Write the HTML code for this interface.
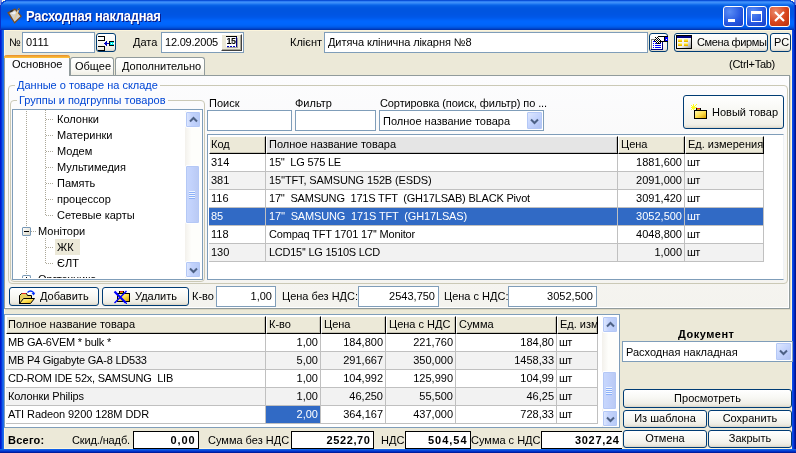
<!DOCTYPE html>
<html lang="ru"><head><meta charset="utf-8"><title>Расходная накладная</title>
<style>
html,body{margin:0;padding:0}
body{will-change:transform;width:796px;height:453px;overflow:hidden;position:relative;background:#ece9d8;font-family:"Liberation Sans",sans-serif;font-size:11px;color:#000;line-height:13px}
.a{position:absolute;white-space:pre}
.t{position:absolute;white-space:pre;height:13px;line-height:13px}
.inp{position:absolute;box-sizing:border-box;border:1px solid #7f9db9;background:#fff}
.btn{position:absolute;box-sizing:border-box;border:1px solid #003c74;border-radius:3px;background:linear-gradient(to top,#d6d0c5 0,#e3e0d4 1px,#ebe9df 2px,#f1f0e9 4px,#f8f8f4 55%,#fff 100%);text-align:center}
.blue{color:#0046d5}
.b{font-weight:bold}
.r{text-align:right}
.gb{position:absolute;box-sizing:border-box;border:1px solid #cbc9b6;border-radius:4px}
.hd{position:absolute;box-sizing:border-box;height:18px;background:#ece9d8;border-right:1px solid #000;border-bottom:1px solid #000;border-top:1px solid #fff;border-left:1px solid #fff;box-shadow:inset -1px -1px 0 rgba(0,0,0,.16)}
.hd.g{background:#e5e5e5}
.cell{position:absolute;box-sizing:border-box;height:18px;border-right:1px solid #c0c0c0;border-bottom:1px solid #c0c0c0;line-height:17px;white-space:pre;overflow:hidden}
.sb{position:absolute;background:linear-gradient(90deg,#f3f1ec,#fefefb 40%,#fefefb)}
.sbb{position:absolute;box-sizing:border-box;border:1px solid #fff;border-radius:2px;background:linear-gradient(90deg,#e1eafe,#c3d3fd 40%,#b7caf5);box-shadow:inset 0 0 0 1px #b4c8f6}
.sbt{position:absolute;box-sizing:border-box;border:1px solid #fff;border-radius:2px;background:linear-gradient(90deg,#c9d8fc,#c2d2fc 40%,#b9c9f3);box-shadow:inset 0 0 0 1px #b4c8f6}
.vb{position:absolute;box-sizing:border-box;border:1px solid #000;background:#fff;height:17px}
.dd{position:absolute;box-sizing:border-box;border:1px solid #fff;border-radius:2px;background:linear-gradient(135deg,#e1eafe,#c3d3fd 50%,#aebff0);box-shadow:inset 0 0 0 1px #b4c8f6}
</style></head><body>
<div class="a" style="left:0;top:0;width:796px;height:30px;background:linear-gradient(#0a50d8 0px,#0a50d8 1px,#2f7ff5 1px,#2f7ff5 2px,#3d8ff8 2px,#3d8ff8 3px,#2c82f5 3px,#2c82f5 4px,#1570ee 4px,#1570ee 5px,#0862e6 5px,#0862e6 6px,#035ce3 6px,#035ce3 7px,#0158e1 7px,#0158e1 8px,#0056e0 8px,#0056e0 9px,#0055e0 9px,#0055e0 10px,#0055e0 10px,#0055e0 11px,#0055e0 11px,#0055e0 12px,#0055e1 12px,#0055e1 13px,#0055e2 13px,#0055e2 14px,#0055e3 14px,#0055e3 15px,#0056e5 15px,#0056e5 16px,#0057e7 16px,#0057e7 17px,#0059ea 17px,#0059ea 18px,#005cef 18px,#005cef 19px,#0060f5 19px,#0060f5 20px,#0064fb 20px,#0064fb 21px,#0066fe 21px,#0066fe 22px,#0066fe 22px,#0066fe 23px,#0066fd 23px,#0066fd 24px,#0065fb 24px,#0065fb 25px,#0062f6 25px,#0062f6 26px,#005ded 26px,#005ded 27px,#0054e0 27px,#0054e0 28px,#0047cc 28px,#0047cc 29px,#0036b4 29px,#0036b4 30px)"></div>
<div class="a" style="left:0;top:30px;width:4px;height:423px;background:linear-gradient(90deg,#0019cf 0 1px,#0831d9 1px 2px,#0f5ce6 2px 3px,#1e6cec 3px 4px)"></div>
<div class="a" style="left:792px;top:30px;width:4px;height:423px;background:linear-gradient(90deg,#0a4ce6 0 1px,#0838d8 1px 2px,#0024b4 2px 3px,#001590 3px 4px)"></div>
<div class="a" style="left:0;top:449px;width:796px;height:4px;background:linear-gradient(#1060e8 0 1px,#0848d8 1px 2px,#0030c8 2px 3px,#001c9c 3px 4px)"></div>
<div class="a b" style="left:26px;top:9px;font-size:13px;line-height:16px;color:#fff;text-shadow:1px 1px 0 #0a1883;letter-spacing:-0.3px;transform:scaleY(1.07);transform-origin:0 13px">Расходная накладная</div>
<div class="a" style="left:723px;top:6px;width:21px;height:21px;box-sizing:border-box;border:1px solid #fff;border-radius:3px;background:radial-gradient(circle at 30% 25%,#5a8df5,#2456e0 60%,#1a3fc4)"><div class="a" style="left:4px;top:12px;width:7px;height:3px;background:#fff"></div></div>
<div class="a" style="left:746px;top:6px;width:21px;height:21px;box-sizing:border-box;border:1px solid #fff;border-radius:3px;background:radial-gradient(circle at 30% 25%,#5a8df5,#2456e0 60%,#1a3fc4)"><div class="a" style="left:4px;top:4px;width:11px;height:11px;box-sizing:border-box;border:1px solid #fff;border-top-width:3px"></div></div>
<div class="a" style="left:769px;top:6px;width:21px;height:21px;box-sizing:border-box;border:1px solid #fff;border-radius:3px;background:radial-gradient(circle at 30% 25%,#ea8a6c,#d8441c 55%,#b8300c)"><svg class="a" style="left:0;top:0" width="19" height="19"><path d="M5 5l9 9M14 5l-9 9" stroke="#fff" stroke-width="2.2"/></svg></div>
<svg class="a" style="left:6px;top:7px" width="18" height="18" viewBox="6 7 18 18"><polygon points="7.2,12.6 15,8.2 22,16.2 14.6,23.8" fill="#7a4e22" shape-rendering="auto"/><polygon points="9.4,13 15,10 20.4,16.2 14.6,21.8" fill="#d0d0d0" shape-rendering="auto"/><polygon points="11,13.6 14.6,11.6 16,13 14,14.4" fill="#f2f2f2" shape-rendering="auto"/><path d="M10.2 11.8l2.6-1.4" stroke="#303030" stroke-width="1.6" shape-rendering="auto"/><path d="M19 8.6l-4.6 11" stroke="#e8c890" stroke-width="1.5" shape-rendering="auto"/><path d="M19.3 8.2l-.8 2" stroke="#6a4a20" stroke-width="1.4" shape-rendering="auto"/></svg>
<svg class="a" style="left:0;top:0" width="796" height="30" shape-rendering="crispEdges"><rect x="0" y="0" width="2" height="2" fill="#7b8ce3"/><rect x="0" y="2" width="1" height="3" fill="#7b8ce3"/><rect x="2" y="0" width="3" height="1" fill="#fffbe6"/><rect x="2" y="1" width="1" height="1" fill="#fffbe6"/><rect x="1" y="2" width="1" height="1" fill="#3a55d8"/><rect x="794" y="0" width="2" height="2" fill="#7b8ce3"/><rect x="795" y="2" width="1" height="3" fill="#7b8ce3"/><rect x="791" y="0" width="3" height="1" fill="#fffbe6"/><rect x="793" y="1" width="1" height="1" fill="#fffbe6"/><rect x="794" y="2" width="1" height="1" fill="#3a55d8"/><rect x="3" y="1" width="3" height="1" fill="#0b4bd6"/><rect x="2" y="2" width="2" height="1" fill="#0b4bd6"/><rect x="1" y="3" width="2" height="1" fill="#0b4bd6"/><rect x="1" y="4" width="1" height="1" fill="#0b4bd6"/><rect x="790" y="1" width="3" height="1" fill="#0b4bd6"/><rect x="792" y="2" width="2" height="1" fill="#0b4bd6"/><rect x="793" y="3" width="2" height="1" fill="#0b4bd6"/><rect x="794" y="4" width="1" height="1" fill="#0b4bd6"/><rect x="0" y="5" width="1" height="25" fill="#0a2fc6"/><rect x="795" y="5" width="1" height="25" fill="#001c9c"/><rect x="794" y="5" width="1" height="25" fill="#0838d0"/></svg>
<div class="a" style="left:4px;top:30px;width:788px;height:419px;box-sizing:border-box;border:1px solid #fcf5dc"></div>
<div class="t " style="left:9px;top:36px;">№</div>
<div class="inp" style="left:22px;top:32px;width:73px;height:21px"></div>
<div class="t " style="left:26px;top:36px;">0111</div>
<div class="btn" style="left:96px;top:33px;width:20px;height:19px"></div>
<svg class="a" style="left:96px;top:33px" width="20" height="19" viewBox="96 33 20 19" shape-rendering="crispEdges"><rect x="98" y="36" width="7" height="1" fill="#000"/><rect x="104" y="36" width="1" height="5" fill="#000"/><rect x="98" y="40" width="7" height="1" fill="#000"/><rect x="98" y="46" width="7" height="1" fill="#000"/><rect x="104" y="46" width="1" height="5" fill="#000"/><rect x="98" y="50" width="7" height="1" fill="#000"/><rect x="105" y="43" width="5" height="1" fill="#0000c0"/><rect x="105" y="42" width="2" height="3" fill="#0000c0"/><rect x="106" y="41" width="1" height="5" fill="#0000c0"/><rect x="104" y="43" width="1" height="1" fill="#0000c0"/><rect x="109" y="41" width="5" height="5" fill="#000"/><rect x="110" y="42" width="4" height="3" fill="#00e8e8"/><rect x="111" y="43" width="1" height="1" fill="#fff"/><rect x="113" y="43" width="1" height="1" fill="#fff"/></svg>
<div class="t " style="left:133px;top:36px;">Дата</div>
<div class="inp" style="left:161px;top:32px;width:83px;height:21px"></div>
<div class="t " style="left:165px;top:36px;letter-spacing:-0.206px;">12.09.2005</div>
<div class="a" style="left:221px;top:34px;width:21px;height:17px;box-sizing:border-box;background:#ece9d8;border-top:1px solid #fff;border-left:1px solid #fff;border-right:1px solid #404040;border-bottom:1px solid #404040;box-shadow:inset -1px -1px 0 #aca899"></div>
<svg class="a" style="left:224px;top:35px" width="15" height="13" viewBox="224 35 15 13" shape-rendering="crispEdges"><rect x="226" y="36" width="11" height="1" fill="#000"/><rect x="227" y="38" width="11" height="10" fill="#a0a0a0"/><rect x="226" y="37" width="10" height="10" fill="#fff"/><rect x="236" y="37" width="1" height="10" fill="#000080"/><rect x="227" y="46" width="2" height="1" fill="#0000c0"/><rect x="230" y="46" width="2" height="1" fill="#0000c0"/><rect x="233" y="46" width="2" height="1" fill="#0000c0"/></svg>
<div class="a b" style="left:226px;top:36px;width:10px;height:10px;font-size:9px;line-height:10px;text-align:center;letter-spacing:-0.5px">15</div>
<div class="t " style="left:290px;top:36px;">Клієнт</div>
<div class="inp" style="left:324px;top:32px;width:324px;height:21px"></div>
<div class="t " style="left:328px;top:36px;letter-spacing:-0.083px;">Дитяча клінична лікарня №8</div>
<div class="btn" style="left:649px;top:33px;width:19px;height:19px"></div>
<svg class="a" style="left:650px;top:34px" width="18" height="17" viewBox="650 34 18 17" shape-rendering="crispEdges"><rect x="651" y="39" width="11" height="1" fill="#808080"/><rect x="651" y="39" width="1" height="11" fill="#808080"/><rect x="652" y="40" width="10" height="9" fill="#fff"/><rect x="651" y="49" width="12" height="1" fill="#000080"/><rect x="662" y="41" width="1" height="9" fill="#000080"/><rect x="653" y="41" width="2" height="1" fill="#0000ff"/><rect x="653" y="43" width="1" height="1" fill="#0000ff"/><rect x="655" y="43" width="6" height="1" fill="#0000ff"/><rect x="653" y="45" width="1" height="1" fill="#0000ff"/><rect x="655" y="45" width="6" height="1" fill="#0000ff"/><rect x="653" y="47" width="1" height="1" fill="#0000ff"/><rect x="655" y="47" width="6" height="1" fill="#0000ff"/><polygon points="654.5,40.5 658.5,36.5 664.5,36.5 664.5,41.5 661.5,41.5 659.5,43.5" fill="#fff" stroke="none"/><rect x="658" y="36" width="7" height="1" fill="#000"/><rect x="660" y="41" width="5" height="1" fill="#000"/><rect x="654" y="40" width="1" height="1" fill="#000"/><rect x="655" y="39" width="1" height="1" fill="#000"/><rect x="656" y="38" width="1" height="1" fill="#000"/><rect x="657" y="37" width="1" height="1" fill="#000"/><rect x="658" y="36" width="1" height="1" fill="#000"/><rect x="655" y="41" width="1" height="1" fill="#000"/><rect x="656" y="42" width="1" height="1" fill="#000"/><rect x="657" y="43" width="1" height="1" fill="#000"/><rect x="658" y="43" width="1" height="1" fill="#000"/><rect x="659" y="43" width="1" height="1" fill="#000"/><rect x="655" y="37" width="1" height="1" fill="#000"/><rect x="657" y="37" width="1" height="1" fill="#000"/><rect x="656" y="38" width="1" height="1" fill="#000"/><rect x="658" y="38" width="1" height="1" fill="#000"/><rect x="655" y="39" width="1" height="1" fill="#000"/><rect x="657" y="39" width="1" height="1" fill="#000"/><rect x="659" y="39" width="1" height="1" fill="#000"/><rect x="656" y="40" width="1" height="1" fill="#000"/><rect x="658" y="40" width="1" height="1" fill="#000"/><rect x="660" y="40" width="1" height="1" fill="#000"/><rect x="655" y="41" width="1" height="1" fill="#000"/><rect x="657" y="41" width="1" height="1" fill="#000"/><rect x="659" y="41" width="1" height="1" fill="#000"/><rect x="661" y="41" width="1" height="1" fill="#000"/><rect x="656" y="42" width="1" height="1" fill="#000"/><rect x="658" y="42" width="1" height="1" fill="#000"/><rect x="660" y="42" width="1" height="1" fill="#000"/><rect x="664" y="36" width="4" height="6" fill="#000"/><rect x="665" y="37" width="3" height="4" fill="#0000ff"/><rect x="666" y="39" width="1" height="1" fill="#fff"/></svg>
<div class="btn" style="left:674px;top:33px;width:94px;height:19px"></div>
<div class="t " style="left:697px;top:36px;letter-spacing:-0.378px;">Смена фирмы</div>
<svg class="a" style="left:676px;top:35px" width="16" height="14" viewBox="676 35 16 14" shape-rendering="crispEdges"><rect x="676" y="35" width="16" height="14" fill="#000"/><defs><linearGradient id="wg" x1="0" y1="0" x2="1" y2="1"><stop offset="0" stop-color="#fff"/><stop offset="0.6" stop-color="#f0f0f0"/><stop offset="1" stop-color="#9a9a9a"/></linearGradient></defs><rect x="677" y="36" width="14" height="12" fill="url(#wg)"/><rect x="677" y="36" width="14" height="2" fill="#000080"/><rect x="678" y="39" width="4" height="3" fill="#ffd820"/><rect x="678" y="39" width="4" height="1" fill="#fff080"/><rect x="678" y="41" width="4" height="1" fill="#e8b800"/><rect x="678" y="43" width="4" height="3" fill="#ffd820"/><rect x="678" y="43" width="4" height="1" fill="#fff080"/><rect x="678" y="45" width="4" height="1" fill="#e8b800"/><rect x="684" y="39" width="4" height="3" fill="#ffd820"/><rect x="684" y="39" width="4" height="1" fill="#fff080"/><rect x="684" y="41" width="4" height="1" fill="#e8b800"/><rect x="684" y="43" width="4" height="3" fill="#ffd820"/><rect x="684" y="43" width="4" height="1" fill="#fff080"/><rect x="684" y="45" width="4" height="1" fill="#e8b800"/></svg>
<div class="btn" style="left:770px;top:33px;width:21px;height:19px"></div>
<div class="t " style="left:774px;top:36px;">РС</div>
<div class="t " style="left:729px;top:58px;letter-spacing:-0.259px;">(Ctrl+Tab)</div>
<div class="a" style="left:4px;top:75px;width:786px;height:234px;box-sizing:border-box;border:1px solid #919b9c;background:linear-gradient(#fcfcfe,#f4f3ee);box-shadow:inset -1px -1px 0 #fff,1px 1px 0 #dcd8c4"></div>
<div class="a" style="left:70px;top:57px;width:44px;height:18px;box-sizing:border-box;border:1px solid #919b9c;border-bottom:0;border-radius:3px 3px 0 0;background:linear-gradient(#ffffff,#fbfbf8 60%,#f0eee4)"></div>
<div class="a" style="left:115px;top:57px;width:90px;height:18px;box-sizing:border-box;border:1px solid #919b9c;border-bottom:0;border-radius:3px 3px 0 0;background:linear-gradient(#ffffff,#fbfbf8 60%,#f0eee4)"></div>
<div class="a" style="left:4px;top:55px;width:66px;height:21px;box-sizing:border-box;border:1px solid #919b9c;border-bottom:0;border-top:0;border-radius:3px 3px 0 0;background:#fcfcfe"><div class="a" style="left:-1px;top:0;width:66px;height:3px;border-radius:3px 3px 0 0;background:linear-gradient(#e68b2c,#ffc73c)"></div></div>
<div class="t " style="left:12px;top:58px;">Основное</div>
<div class="t " style="left:75px;top:60px;">Общее</div>
<div class="t " style="left:122px;top:60px;">Дополнительно</div>
<div class="gb" style="left:8px;top:85px;width:780px;height:199px"></div>
<div class="t blue" style="left:15px;top:79px;background:#fcfcfe;padding:0 2px">Данные о товаре на складе</div>
<div class="gb" style="left:10px;top:100px;width:195px;height:182px"></div>
<div class="t blue" style="left:17px;top:94px;background:#fbfbfc;padding:0 2px">Группы и подгруппы товаров</div>
<div class="inp" style="left:12px;top:109px;width:191px;height:171px;overflow:hidden"></div>
<div class="a" style="left:26px;top:111px;width:1px;height:116px;background:repeating-linear-gradient(#aca899 0 1px,transparent 1px 2px)"></div>
<div class="a" style="left:26px;top:237px;width:1px;height:38px;background:repeating-linear-gradient(#aca899 0 1px,transparent 1px 2px)"></div>
<div class="a" style="left:45px;top:110px;width:1px;height:106px;background:repeating-linear-gradient(#aca899 0 1px,transparent 1px 2px)"></div>
<div class="a" style="left:45px;top:238px;width:1px;height:26px;background:repeating-linear-gradient(#aca899 0 1px,transparent 1px 2px)"></div>
<div class="a" style="left:46px;top:119px;width:8px;height:1px;background:repeating-linear-gradient(90deg,#aca899 0 1px,transparent 1px 2px)"></div>
<div class="t " style="left:57px;top:113px;">Колонки</div>
<div class="a" style="left:46px;top:135px;width:8px;height:1px;background:repeating-linear-gradient(90deg,#aca899 0 1px,transparent 1px 2px)"></div>
<div class="t " style="left:57px;top:129px;">Материнки</div>
<div class="a" style="left:46px;top:151px;width:8px;height:1px;background:repeating-linear-gradient(90deg,#aca899 0 1px,transparent 1px 2px)"></div>
<div class="t " style="left:57px;top:145px;">Модем</div>
<div class="a" style="left:46px;top:167px;width:8px;height:1px;background:repeating-linear-gradient(90deg,#aca899 0 1px,transparent 1px 2px)"></div>
<div class="t " style="left:57px;top:161px;">Мультимедия</div>
<div class="a" style="left:46px;top:183px;width:8px;height:1px;background:repeating-linear-gradient(90deg,#aca899 0 1px,transparent 1px 2px)"></div>
<div class="t " style="left:57px;top:177px;">Память</div>
<div class="a" style="left:46px;top:199px;width:8px;height:1px;background:repeating-linear-gradient(90deg,#aca899 0 1px,transparent 1px 2px)"></div>
<div class="t " style="left:57px;top:193px;">процессор</div>
<div class="a" style="left:46px;top:215px;width:8px;height:1px;background:repeating-linear-gradient(90deg,#aca899 0 1px,transparent 1px 2px)"></div>
<div class="t " style="left:57px;top:209px;">Сетевые карты</div>
<div class="a" style="left:31px;top:231px;width:5px;height:1px;background:repeating-linear-gradient(90deg,#aca899 0 1px,transparent 1px 2px)"></div>
<div class="a" style="left:22px;top:227px;width:9px;height:9px;box-sizing:border-box;border:1px solid #7898b5;border-radius:1px;background:linear-gradient(135deg,#fff,#d8d4c4)"><div class="a" style="left:1px;top:3px;width:5px;height:1px;background:#000"></div></div>
<div class="t " style="left:38px;top:225px;">Монітори</div>
<div class="a" style="left:55px;top:239px;width:25px;height:16px;background:#ece9d8"></div>
<div class="a" style="left:46px;top:247px;width:8px;height:1px;background:repeating-linear-gradient(90deg,#aca899 0 1px,transparent 1px 2px)"></div>
<div class="t " style="left:57px;top:241px;">ЖК</div>
<div class="a" style="left:46px;top:263px;width:8px;height:1px;background:repeating-linear-gradient(90deg,#aca899 0 1px,transparent 1px 2px)"></div>
<div class="t " style="left:57px;top:257px;">ЄЛТ</div>
<div class="a" style="left:22px;top:275px;width:9px;height:3px;box-sizing:border-box;border:1px solid #7898b5;border-bottom:0;border-radius:2px 2px 0 0;background:#fff"><div class="a" style="left:3px;top:1px;width:1px;height:1px;background:#000"></div></div>
<div class="a" style="left:38px;top:273px;height:5px;overflow:hidden;line-height:13px">Оргтехника</div>
<div class="sb" style="left:185px;top:111px;width:16px;height:167px"></div>
<div class="sbb" style="left:185px;top:111px;width:16px;height:17px"><svg class="a" style="left:3px;top:4px" width="9" height="7"><path d="M1 5.5l3.5-3.5 3.5 3.5" fill="none" stroke="#4d6185" stroke-width="2"/></svg></div>
<div class="sbb" style="left:185px;top:261px;width:16px;height:17px"><svg class="a" style="left:3px;top:5px" width="9" height="7"><path d="M1 1.5l3.5 3.5 3.5-3.5" fill="none" stroke="#4d6185" stroke-width="2"/></svg></div>
<div class="sbt" style="left:185px;top:165px;width:15px;height:59px"></div>
<div class="a" style="left:189px;top:191px;width:6px;height:1px;background:#eef4fe;box-shadow:0 1px 0 #8cb0f8"></div>
<div class="a" style="left:189px;top:193px;width:6px;height:1px;background:#eef4fe;box-shadow:0 1px 0 #8cb0f8"></div>
<div class="a" style="left:189px;top:195px;width:6px;height:1px;background:#eef4fe;box-shadow:0 1px 0 #8cb0f8"></div>
<div class="a" style="left:189px;top:197px;width:6px;height:1px;background:#eef4fe;box-shadow:0 1px 0 #8cb0f8"></div>
<div class="t " style="left:209px;top:97px;">Поиск</div>
<div class="t " style="left:295px;top:97px;">Фильтр</div>
<div class="t " style="left:380px;top:97px;letter-spacing:-0.103px;">Сортировка (поиск, фильтр) по ...</div>
<div class="inp" style="left:207px;top:110px;width:85px;height:21px"></div>
<div class="inp" style="left:295px;top:110px;width:81px;height:21px"></div>
<div class="inp" style="left:379px;top:110px;width:165px;height:21px"></div>
<div class="t " style="left:383px;top:115px;">Полное название товара</div>
<div class="dd" style="left:526px;top:111px;width:17px;height:19px"><svg class="a" style="left:3px;top:6px" width="9" height="7"><path d="M1 1.5l3.5 3.5 3.5-3.5" fill="none" stroke="#4d6185" stroke-width="2"/></svg></div>
<div class="btn" style="left:683px;top:95px;width:101px;height:34px"></div>
<div class="t " style="left:712px;top:106px;">Новый товар</div>
<svg class="a" style="left:690px;top:103px" width="18" height="17" viewBox="690 103 18 17" shape-rendering="crispEdges"><defs><linearGradient id="fg" x1="0" y1="0" x2="1" y2="1"><stop offset="0" stop-color="#fff8b0"/><stop offset="0.5" stop-color="#ffe050"/><stop offset="1" stop-color="#d8a000"/></linearGradient></defs><rect x="694" y="110" width="13" height="9" fill="#000"/><rect x="695" y="111" width="11" height="7" fill="url(#fg)"/><rect x="696" y="108" width="5" height="2" fill="#000"/><rect x="697" y="108" width="3" height="1" fill="#e02020"/><rect x="697" y="109" width="3" height="1" fill="#c8a000"/><rect x="691" y="107" width="6" height="1" fill="#ffff20"/><rect x="693" y="104" width="1" height="6" fill="#ffff20"/><rect x="691" y="105" width="1" height="1" fill="#ffff20"/><rect x="692" y="106" width="1" height="1" fill="#ffff20"/><rect x="694" y="106" width="1" height="1" fill="#ffff20"/><rect x="695" y="105" width="1" height="1" fill="#ffff20"/><rect x="696" y="104" width="1" height="1" fill="#ffff20"/><rect x="692" y="108" width="1" height="1" fill="#ffff20"/><rect x="691" y="109" width="1" height="1" fill="#ffff20"/><rect x="694" y="108" width="1" height="1" fill="#ffff20"/></svg>
<div class="inp" style="left:207px;top:134px;width:577px;height:146px;border-right-color:#eef2f6"></div>
<div class="hd" style="left:209px;top:136px;width:57px"></div>
<div class="t " style="left:211px;top:138px;">Код</div>
<div class="hd g" style="left:266px;top:136px;width:352px"></div>
<div class="t " style="left:269px;top:138px;">Полное название товара</div>
<div class="hd" style="left:618px;top:136px;width:67px"></div>
<div class="t " style="left:621px;top:138px;">Цена</div>
<div class="hd" style="left:685px;top:136px;width:79px"></div>
<div class="t " style="left:688px;top:138px;">Ед. измерения</div>
<div class="cell" style="left:209px;top:154px;width:57px;background:#fff"></div>
<div class="t " style="left:211px;top:156px;color:#000;">314</div>
<div class="cell" style="left:266px;top:154px;width:352px;background:#fff"></div>
<div class="t " style="left:269px;top:156px;color:#000;letter-spacing:-0.210px;">15''  LG 575 LE</div>
<div class="cell" style="left:618px;top:154px;width:67px;background:#fff"></div>
<div class="t r " style="right:114px;top:156px;color:#000;">1881,600</div>
<div class="cell" style="left:685px;top:154px;width:79px;background:#fff"></div>
<div class="t " style="left:687px;top:156px;color:#000;letter-spacing:-0.638px;">шт</div>
<div class="cell" style="left:209px;top:172px;width:57px;background:#f2f2f2"></div>
<div class="t " style="left:211px;top:174px;color:#000;">381</div>
<div class="cell" style="left:266px;top:172px;width:352px;background:#f2f2f2"></div>
<div class="t " style="left:269px;top:174px;color:#000;letter-spacing:-0.132px;">15''TFT, SAMSUNG 152B (ESDS)</div>
<div class="cell" style="left:618px;top:172px;width:67px;background:#f2f2f2"></div>
<div class="t r " style="right:114px;top:174px;color:#000;">2091,000</div>
<div class="cell" style="left:685px;top:172px;width:79px;background:#f2f2f2"></div>
<div class="t " style="left:687px;top:174px;color:#000;letter-spacing:-0.638px;">шт</div>
<div class="cell" style="left:209px;top:190px;width:57px;background:#fff"></div>
<div class="t " style="left:211px;top:192px;color:#000;">116</div>
<div class="cell" style="left:266px;top:190px;width:352px;background:#fff"></div>
<div class="t " style="left:269px;top:192px;color:#000;letter-spacing:-0.186px;">17''  SAMSUNG  171S TFT  (GH17LSAB) BLACK Pivot</div>
<div class="cell" style="left:618px;top:190px;width:67px;background:#fff"></div>
<div class="t r " style="right:114px;top:192px;color:#000;">3091,420</div>
<div class="cell" style="left:685px;top:190px;width:79px;background:#fff"></div>
<div class="t " style="left:687px;top:192px;color:#000;letter-spacing:-0.638px;">шт</div>
<div class="cell" style="left:209px;top:208px;width:57px;background:#316ac5"></div>
<div class="t " style="left:211px;top:210px;color:#fff;">85</div>
<div class="cell" style="left:266px;top:208px;width:352px;background:#316ac5"></div>
<div class="t " style="left:269px;top:210px;color:#fff;letter-spacing:-0.146px;">17''  SAMSUNG  171S TFT  (GH17LSAS)</div>
<div class="cell" style="left:618px;top:208px;width:67px;background:#316ac5"></div>
<div class="t r " style="right:114px;top:210px;color:#fff;">3052,500</div>
<div class="cell" style="left:685px;top:208px;width:79px;background:#316ac5"></div>
<div class="t " style="left:687px;top:210px;color:#fff;letter-spacing:-0.638px;">шт</div>
<div class="cell" style="left:209px;top:226px;width:57px;background:#fff"></div>
<div class="t " style="left:211px;top:228px;color:#000;">118</div>
<div class="cell" style="left:266px;top:226px;width:352px;background:#fff"></div>
<div class="t " style="left:269px;top:228px;color:#000;letter-spacing:-0.184px;">Compaq TFT 1701 17'' Monitor</div>
<div class="cell" style="left:618px;top:226px;width:67px;background:#fff"></div>
<div class="t r " style="right:114px;top:228px;color:#000;">4048,800</div>
<div class="cell" style="left:685px;top:226px;width:79px;background:#fff"></div>
<div class="t " style="left:687px;top:228px;color:#000;letter-spacing:-0.638px;">шт</div>
<div class="cell" style="left:209px;top:244px;width:57px;background:#f2f2f2"></div>
<div class="t " style="left:211px;top:246px;color:#000;">130</div>
<div class="cell" style="left:266px;top:244px;width:352px;background:#f2f2f2"></div>
<div class="t " style="left:269px;top:246px;color:#000;letter-spacing:-0.255px;">LCD15'' LG 1510S LCD</div>
<div class="cell" style="left:618px;top:244px;width:67px;background:#f2f2f2"></div>
<div class="t r " style="right:114px;top:246px;color:#000;">1,000</div>
<div class="cell" style="left:685px;top:244px;width:79px;background:#f2f2f2"></div>
<div class="t " style="left:687px;top:246px;color:#000;letter-spacing:-0.638px;">шт</div>
<div class="btn" style="left:9px;top:287px;width:90px;height:19px"></div>
<div class="t " style="left:40px;top:290px;">Добавить</div>
<svg class="a" style="left:18px;top:288px" width="18" height="17" viewBox="18 288 18 17" shape-rendering="crispEdges"><defs><linearGradient id="fg2" x1="0" y1="0" x2="1" y2="1"><stop offset="0" stop-color="#fff8b0"/><stop offset="0.5" stop-color="#ffe050"/><stop offset="1" stop-color="#d8a000"/></linearGradient></defs><polygon points="19.5,295.5 21.5,293.5 26.5,293.5 27.5,295.5 31.5,295.5 31.5,298.5 19.5,303.5" fill="#e8d060" stroke="#000" shape-rendering="auto"/><rect x="22" y="293" width="4" height="1" fill="#e02020"/><polygon points="23.5,298.5 34.5,298.5 30.5,303.5 19.5,303.5" fill="url(#fg2)" stroke="#000" shape-rendering="auto"/><path d="M27.5 292.5q3-3 6 0v1.5" fill="none" stroke="#0030ff" stroke-width="1.3" shape-rendering="auto"/><path d="M31.5 293l2.2 2.4 1.6-2.6z" fill="#0030ff" shape-rendering="auto"/></svg>
<div class="btn" style="left:102px;top:287px;width:87px;height:19px"></div>
<div class="t " style="left:135px;top:290px;">Удалить</div>
<svg class="a" style="left:113px;top:289px" width="18" height="16" viewBox="113 289 18 16" shape-rendering="crispEdges"><defs><linearGradient id="fg3" x1="0" y1="0" x2="1" y2="1"><stop offset="0" stop-color="#fff8b0"/><stop offset="0.5" stop-color="#ffe050"/><stop offset="1" stop-color="#d8a000"/></linearGradient></defs><rect x="117" y="293" width="13" height="9" fill="#000"/><rect x="118" y="294" width="11" height="7" fill="url(#fg3)"/><rect x="119" y="291" width="5" height="2" fill="#000"/><rect x="120" y="291" width="3" height="1" fill="#e02020"/><rect x="120" y="292" width="3" height="1" fill="#c8a000"/><path d="M114.5 291.5l11.5 11.5" stroke="#0000ff" stroke-width="2.2" shape-rendering="auto"/><path d="M126.5 291l-12 12" stroke="#0000ff" stroke-width="1.4" shape-rendering="auto"/><rect x="126" y="303" width="1" height="1" fill="#0000ff"/></svg>
<div class="t " style="left:192px;top:290px;">К-во</div>
<div class="inp" style="left:216px;top:286px;width:60px;height:21px"></div>
<div class="t r " style="right:524px;top:290px;">1,00</div>
<div class="t " style="left:282px;top:290px;">Цена без НДС:</div>
<div class="inp" style="left:358px;top:286px;width:81px;height:21px"></div>
<div class="t r " style="right:361px;top:290px;">2543,750</div>
<div class="t " style="left:444px;top:290px;">Цена с НДС:</div>
<div class="inp" style="left:508px;top:286px;width:89px;height:21px"></div>
<div class="t r " style="right:203px;top:290px;">3052,500</div>
<div class="inp" style="left:4px;top:314px;width:616px;height:114px"></div>
<div class="hd" style="left:6px;top:316px;width:260px"></div>
<div class="t " style="left:8px;top:318px;">Полное название товара</div>
<div class="hd" style="left:266px;top:316px;width:55px"></div>
<div class="t " style="left:269px;top:318px;">К-во</div>
<div class="hd" style="left:321px;top:316px;width:65px"></div>
<div class="t " style="left:324px;top:318px;">Цена</div>
<div class="hd" style="left:386px;top:316px;width:70px"></div>
<div class="t " style="left:389px;top:318px;">Цена с НДС</div>
<div class="hd" style="left:456px;top:316px;width:101px"></div>
<div class="t " style="left:459px;top:318px;">Сумма</div>
<div class="hd" style="left:557px;top:316px;width:41px"></div>
<div class="t " style="left:560px;top:318px;">Ед. изм</div>
<div class="cell" style="left:6px;top:334px;width:260px;background:#fff"></div>
<div class="t " style="left:8px;top:336px;color:#000;letter-spacing:-0.210px;">MB GA-6VEM * bulk *</div>
<div class="cell" style="left:266px;top:334px;width:55px;background:#fff"></div>
<div class="t r " style="right:478px;top:336px;color:#000;">1,00</div>
<div class="cell" style="left:321px;top:334px;width:65px;background:#fff"></div>
<div class="t r " style="right:413px;top:336px;color:#000;">184,800</div>
<div class="cell" style="left:386px;top:334px;width:70px;background:#fff"></div>
<div class="t r " style="right:343px;top:336px;color:#000;">221,760</div>
<div class="cell" style="left:456px;top:334px;width:101px;background:#fff"></div>
<div class="t r " style="right:242px;top:336px;color:#000;">184,80</div>
<div class="cell" style="left:557px;top:334px;width:41px;background:#fff"></div>
<div class="t " style="left:559px;top:336px;color:#000;letter-spacing:-0.638px;">шт</div>
<div class="cell" style="left:6px;top:352px;width:260px;background:#f2f2f2"></div>
<div class="t " style="left:8px;top:354px;color:#000;letter-spacing:-0.224px;">MB P4 Gigabyte GA-8 LD533</div>
<div class="cell" style="left:266px;top:352px;width:55px;background:#f2f2f2"></div>
<div class="t r " style="right:478px;top:354px;color:#000;">5,00</div>
<div class="cell" style="left:321px;top:352px;width:65px;background:#f2f2f2"></div>
<div class="t r " style="right:413px;top:354px;color:#000;">291,667</div>
<div class="cell" style="left:386px;top:352px;width:70px;background:#f2f2f2"></div>
<div class="t r " style="right:343px;top:354px;color:#000;">350,000</div>
<div class="cell" style="left:456px;top:352px;width:101px;background:#f2f2f2"></div>
<div class="t r " style="right:242px;top:354px;color:#000;">1458,33</div>
<div class="cell" style="left:557px;top:352px;width:41px;background:#f2f2f2"></div>
<div class="t " style="left:559px;top:354px;color:#000;letter-spacing:-0.638px;">шт</div>
<div class="cell" style="left:6px;top:370px;width:260px;background:#fff"></div>
<div class="t " style="left:8px;top:372px;color:#000;letter-spacing:-0.242px;">CD-ROM IDE 52x, SAMSUNG  LIB</div>
<div class="cell" style="left:266px;top:370px;width:55px;background:#fff"></div>
<div class="t r " style="right:478px;top:372px;color:#000;">1,00</div>
<div class="cell" style="left:321px;top:370px;width:65px;background:#fff"></div>
<div class="t r " style="right:413px;top:372px;color:#000;">104,992</div>
<div class="cell" style="left:386px;top:370px;width:70px;background:#fff"></div>
<div class="t r " style="right:343px;top:372px;color:#000;">125,990</div>
<div class="cell" style="left:456px;top:370px;width:101px;background:#fff"></div>
<div class="t r " style="right:242px;top:372px;color:#000;">104,99</div>
<div class="cell" style="left:557px;top:370px;width:41px;background:#fff"></div>
<div class="t " style="left:559px;top:372px;color:#000;letter-spacing:-0.638px;">шт</div>
<div class="cell" style="left:6px;top:388px;width:260px;background:#f2f2f2"></div>
<div class="t " style="left:8px;top:390px;color:#000;letter-spacing:-0.096px;">Колонки Philips</div>
<div class="cell" style="left:266px;top:388px;width:55px;background:#f2f2f2"></div>
<div class="t r " style="right:478px;top:390px;color:#000;">1,00</div>
<div class="cell" style="left:321px;top:388px;width:65px;background:#f2f2f2"></div>
<div class="t r " style="right:413px;top:390px;color:#000;">46,250</div>
<div class="cell" style="left:386px;top:388px;width:70px;background:#f2f2f2"></div>
<div class="t r " style="right:343px;top:390px;color:#000;">55,500</div>
<div class="cell" style="left:456px;top:388px;width:101px;background:#f2f2f2"></div>
<div class="t r " style="right:242px;top:390px;color:#000;">46,25</div>
<div class="cell" style="left:557px;top:388px;width:41px;background:#f2f2f2"></div>
<div class="t " style="left:559px;top:390px;color:#000;letter-spacing:-0.638px;">шт</div>
<div class="cell" style="left:6px;top:406px;width:260px;background:#fff"></div>
<div class="t " style="left:8px;top:408px;color:#000;letter-spacing:-0.078px;">ATI Radeon 9200 128M DDR</div>
<div class="cell" style="left:266px;top:406px;width:55px;background:#316ac5"></div>
<div class="t r " style="right:478px;top:408px;color:#fff;">2,00</div>
<div class="cell" style="left:321px;top:406px;width:65px;background:#fff"></div>
<div class="t r " style="right:413px;top:408px;color:#000;">364,167</div>
<div class="cell" style="left:386px;top:406px;width:70px;background:#fff"></div>
<div class="t r " style="right:343px;top:408px;color:#000;">437,000</div>
<div class="cell" style="left:456px;top:406px;width:101px;background:#fff"></div>
<div class="t r " style="right:242px;top:408px;color:#000;">728,33</div>
<div class="cell" style="left:557px;top:406px;width:41px;background:#fff"></div>
<div class="t " style="left:559px;top:408px;color:#000;letter-spacing:-0.638px;">шт</div>
<div class="sb" style="left:602px;top:316px;width:16px;height:111px"></div>
<div class="sbb" style="left:602px;top:316px;width:16px;height:17px"><svg class="a" style="left:3px;top:4px" width="9" height="7"><path d="M1 5.5l3.5-3.5 3.5 3.5" fill="none" stroke="#4d6185" stroke-width="2"/></svg></div>
<div class="sbb" style="left:602px;top:410px;width:16px;height:17px"><svg class="a" style="left:3px;top:5px" width="9" height="7"><path d="M1 1.5l3.5 3.5 3.5-3.5" fill="none" stroke="#4d6185" stroke-width="2"/></svg></div>
<div class="sbt" style="left:602px;top:371px;width:15px;height:39px"></div>
<div class="a" style="left:606px;top:387px;width:6px;height:1px;background:#eef4fe;box-shadow:0 1px 0 #8cb0f8"></div>
<div class="a" style="left:606px;top:389px;width:6px;height:1px;background:#eef4fe;box-shadow:0 1px 0 #8cb0f8"></div>
<div class="a" style="left:606px;top:391px;width:6px;height:1px;background:#eef4fe;box-shadow:0 1px 0 #8cb0f8"></div>
<div class="a" style="left:606px;top:393px;width:6px;height:1px;background:#eef4fe;box-shadow:0 1px 0 #8cb0f8"></div>
<div class="t b" style="left:678px;top:328px;letter-spacing:0.504px;">Документ</div>
<div class="inp" style="left:622px;top:341px;width:171px;height:21px"></div>
<div class="t " style="left:626px;top:346px;">Расходная накладная</div>
<div class="dd" style="left:775px;top:342px;width:17px;height:19px"><svg class="a" style="left:3px;top:6px" width="9" height="7"><path d="M1 1.5l3.5 3.5 3.5-3.5" fill="none" stroke="#4d6185" stroke-width="2"/></svg></div>
<div class="btn" style="left:623px;top:389px;width:169px;height:19px"></div>
<div class="t" style="left:623px;top:392px;width:169px;text-align:center">Просмотреть</div>
<div class="btn" style="left:623px;top:410px;width:84px;height:18px"></div>
<div class="t" style="left:623px;top:412px;width:84px;text-align:center">Из шаблона</div>
<div class="btn" style="left:708px;top:410px;width:84px;height:18px"></div>
<div class="t" style="left:708px;top:412px;width:84px;text-align:center">Сохранить</div>
<div class="btn" style="left:623px;top:430px;width:84px;height:18px"></div>
<div class="t" style="left:623px;top:432px;width:84px;text-align:center">Отмена</div>
<div class="btn" style="left:708px;top:430px;width:84px;height:18px"></div>
<div class="t" style="left:708px;top:432px;width:84px;text-align:center">Закрыть</div>
<div class="t b" style="left:8px;top:434px;letter-spacing:0.250px;">Всего:</div>
<div class="t " style="left:72px;top:434px;letter-spacing:-0.128px;">Скид./надб.</div>
<div class="vb" style="left:133px;top:431px;width:66px;height:18px;"></div>
<div class="t r b" style="right:600.5px;top:434px;letter-spacing:0.895px;">0,00</div>
<div class="t " style="left:208px;top:434px;">Сумма без НДС</div>
<div class="vb" style="left:291px;top:431px;width:83px;height:18px;"></div>
<div class="t r b" style="right:425.5px;top:434px;letter-spacing:0.605px;">2522,70</div>
<div class="t " style="left:381px;top:434px;">НДС</div>
<div class="vb" style="left:405px;top:431px;width:66px;height:18px;"></div>
<div class="t r b" style="right:328.5px;top:434px;letter-spacing:0.974px;">504,54</div>
<div class="t " style="left:471px;top:434px;">Сумма с НДС</div>
<div class="vb" style="left:541px;top:431px;width:81px;height:18px;border-right:0"></div>
<div class="t r b" style="right:176.5px;top:434px;letter-spacing:0.676px;">3027,24</div>
</body></html>
